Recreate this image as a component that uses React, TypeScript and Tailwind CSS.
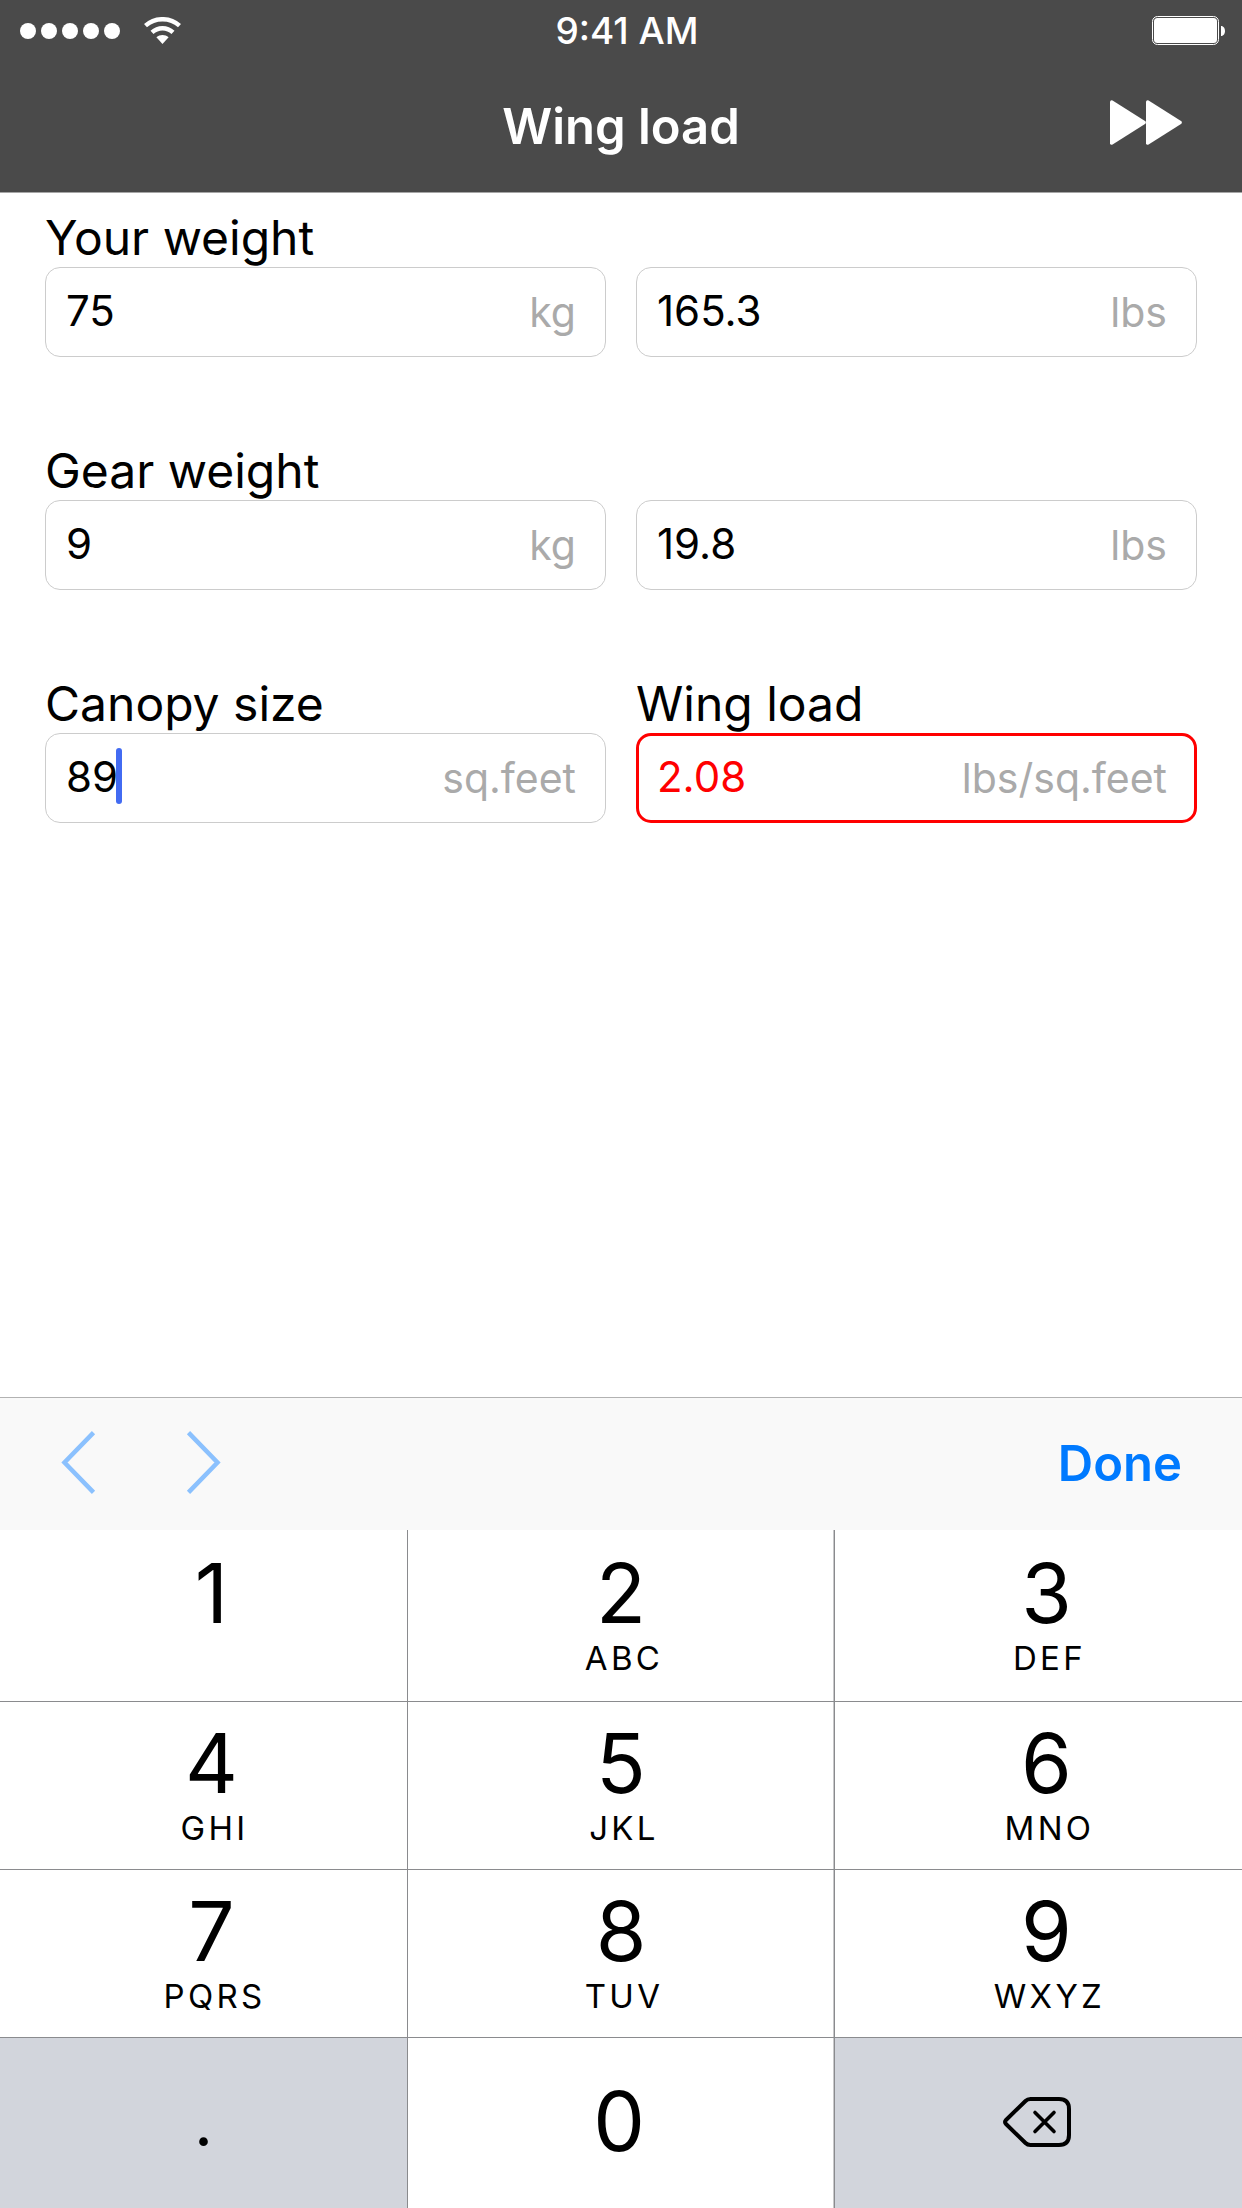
import type { ReactNode } from "react";

function StatusBar() {
  return (
    <div className="grid h-[61px] grid-cols-3 items-center pr-4 pl-5">
      <div className="flex items-center" aria-label="Signal and Wi-Fi">
        <div className="flex gap-[5px]">
          {[0, 1, 2, 3, 4].map((i) => (
            <span key={i} className="size-4 rounded-full bg-white" />
          ))}
        </div>
        <svg className="ml-6 h-[27px] w-[37px]" viewBox="0 0 37 27" fill="none" aria-hidden="true">
          <path d="M1.5 8.7C11 0 26 0 35.500 8.7" stroke="white" strokeWidth="4.4" />
          <path d="M8 15.3C14 9.8 23 9.8 29 15.3" stroke="white" strokeWidth="4.4" />
          <path d="M12.4 20.2C16 17.2 21 17.2 24.6 20.2L18.5 27Z" fill="white" />
        </svg>
      </div>
      <time className="pl-2 text-center text-[37px] leading-[44px] font-medium">9:41 AM</time>
      <svg className="h-[29px] w-[74px] justify-self-end" viewBox="0 0 74 29" role="img" aria-label="Battery full">
        <rect x="0.5" y="0.5" width="66" height="28" rx="5" fill="none" stroke="white" />
        <rect x="2" y="2" width="63" height="25" rx="3.5" fill="white" />
        <path d="M69 10C74.300 10 74.300 20 69 20Z" fill="white" />
      </svg>
    </div>
  );
}

function NavBar() {
  return (
    <div className="grid h-[131px] grid-cols-3 items-center px-[60px]">
      <h1 className="col-start-2 text-center text-[49px] leading-[58px] font-semibold">Wing load</h1>
      <button type="button" aria-label="Next" className="mb-2 justify-self-end">
        <svg className="h-[45px] w-[72px]" viewBox="0 0 72 45" fill="white" aria-hidden="true">
          <path d="M0 1.800Q0.400 -0.500 2.600 0.500L35.400 21.300Q36.300 22.500 35.400 23.700L2.600 44.500Q0.400 45.500 0 43.200Z" />
          <path d="M36 1.800Q36.400 -0.500 38.600 0.500L71.400 21.300Q72.300 22.500 71.400 23.700L38.600 44.500Q36.400 45.500 36 43.200Z" />
        </svg>
      </button>
    </div>
  );
}

type FieldProps = {
  id: string;
  unit: string;
  value: string;
  label?: string;
  name: string;
  active?: boolean;
  alert?: boolean;
};

function Field({ id, unit, value, label, name, active, alert }: FieldProps) {
  return (
    <div className="flex min-w-0 flex-col justify-end">
      {label && (
        <label htmlFor={id} className="text-[48px] leading-[58px] whitespace-nowrap">
          {label}
        </label>
      )}
      <div
        className={
          alert
            ? "flex h-[90px] items-center rounded-[15px] border-[3px] border-[#ff0000] pr-[27px] pl-[18px] text-[42px] text-[#ff0000]"
            : "flex h-[90px] items-center rounded-[15px] border border-[#cccccc] pr-[29px] pl-5 text-[42px]"
        }
      >
        <input
          id={id}
          type="text"
          inputMode="decimal"
          aria-label={label ? undefined : name}
          defaultValue={value}
          className={
            active
              ? "field-sizing-content bg-transparent pb-1 caret-transparent outline-none"
              : "w-full min-w-0 flex-1 bg-transparent pb-1 outline-none"
          }
        />
        {active && <span className="mb-1 -ml-0.5 h-14 w-1.5 rounded-full bg-[#426bf2]" aria-hidden="true" />}
        <span className="ml-auto pt-0.5 pl-4 text-[41px] whitespace-nowrap text-[#aaaaaa]">{unit}</span>
      </div>
    </div>
  );
}

function Toolbar() {
  return (
    <div className="flex h-[133px] items-center border-t border-[#b2b2b2] bg-[#f9f9f9] px-[60px]">
      <button type="button" aria-label="Previous field" className="pb-1">
        <svg className="h-[63px] w-[36px]" viewBox="0 0 36 63" fill="none" aria-hidden="true">
          <path d="M33.500 1.600L4.500 31.500L33.500 61.400" stroke="#8bc1fe" strokeWidth="4.500" />
        </svg>
      </button>
      <button type="button" aria-label="Next field" className="ml-[90px] pb-1">
        <svg className="h-[63px] w-[36px]" viewBox="0 0 36 63" fill="none" aria-hidden="true">
          <path d="M2.500 1.600L31.500 31.500L2.500 61.400" stroke="#8bc1fe" strokeWidth="4.500" />
        </svg>
      </button>
      <button type="button" className="ml-auto text-[49px] leading-[58px] font-semibold text-[#007aff]">
        Done
      </button>
    </div>
  );
}

const digitKeys = [
  ["1", ""],
  ["2", "ABC"],
  ["3", "DEF"],
  ["4", "GHI"],
  ["5", "JKL"],
  ["6", "MNO"],
  ["7", "PQRS"],
  ["8", "TUV"],
  ["9", "WXYZ"],
];

const columnStyles = [
  "border-r border-b border-[#8a8b8e] pl-4",
  "border-r border-b border-[#8a8b8e] shadow-[inset_-1px_0_#c8c8ca]",
  "border-b border-[#8a8b8e] pl-4",
];

function Key({ className, children, label }: { className: string; children: ReactNode; label?: string }) {
  return (
    <button type="button" aria-label={label} className={`flex flex-col items-center justify-center ${className}`}>
      {children}
    </button>
  );
}

function Keypad() {
  return (
    <div className="grid grid-cols-[408fr_427fr_407fr] grid-rows-[172px_168px_168px_170px]">
      {digitKeys.map(([digit, letters], i) => (
        <Key key={digit} className={columnStyles[i % 3]}>
          <span className="text-[82px] leading-[86px]">{digit}</span>
          <span className="h-11 pl-1.5 text-[33px] leading-[42px] tracking-widest">{letters}</span>
        </Key>
      ))}
      <Key className="border-r border-[#8a8b8e] bg-[#d2d5dc] pb-0.5">
        <span className="text-[66px] leading-[84px]">.</span>
      </Key>
      <Key className="border-r border-[#8a8b8e] pr-1 pb-0.5 shadow-[inset_-1px_0_#c8c8ca]">
        <span className="text-[82px] leading-[84px]">0</span>
      </Key>
      <Key className="bg-[#d2d5dc] pr-1 pb-0.5" label="Delete">
        <svg className="h-[50px] w-[68px]" viewBox="0 0 68 50" fill="none" stroke="black" strokeLinecap="round" strokeLinejoin="round" aria-hidden="true">
          <path
            d="M27.500 2H56Q66 2 66 12V38Q66 48 56 48H27.500Q24.500 48 22.500 46L3 27Q1 25 3 23L22.500 4Q24.500 2 27.500 2Z"
            strokeWidth="4"
          />
          <path d="M32 15.500L51 34.500M51 15.500L32 34.500" strokeWidth="3.600" />
        </svg>
      </Key>
    </div>
  );
}

export default function App() {
  return (
    <div className="flex min-h-screen flex-col bg-white font-['Inter',sans-serif] text-black">
      <header className="border-b border-[#a6a6a6] bg-[#4a4a4a] text-white">
        <StatusBar />
        <NavBar />
      </header>
      <main className="flex-1">
        <form className="grid grid-cols-2 gap-x-[30px] gap-y-[85px] px-[45px] pt-4">
          <Field id="weight-kg" label="Your weight" name="Your weight in kilograms" value="75" unit="kg" />
          <Field id="weight-lbs" name="Your weight in pounds" value="165.3" unit="lbs" />
          <Field id="gear-kg" label="Gear weight" name="Gear weight in kilograms" value="9" unit="kg" />
          <Field id="gear-lbs" name="Gear weight in pounds" value="19.8" unit="lbs" />
          <Field id="canopy" label="Canopy size" name="Canopy size" value="89" unit="sq.feet" active />
          <Field id="wing-load" label="Wing load" name="Wing load" value="2.08" unit="lbs/sq.feet" alert />
        </form>
      </main>
      <section aria-label="Keyboard">
        <Toolbar />
        <Keypad />
      </section>
    </div>
  );
}
